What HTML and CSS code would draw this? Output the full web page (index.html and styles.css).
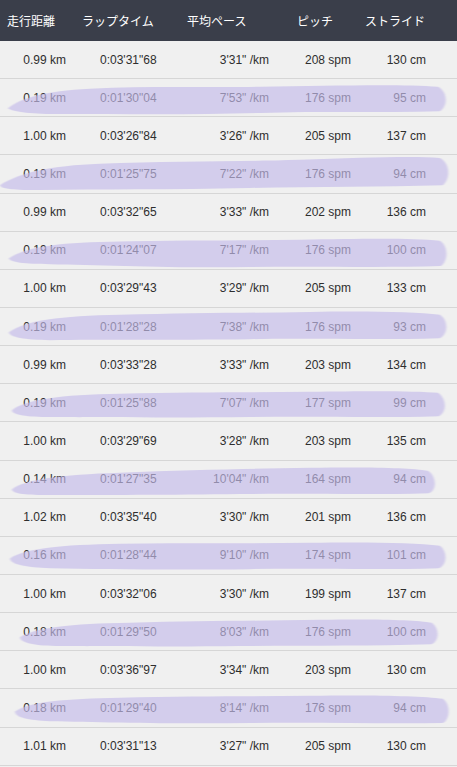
FILE: index.html
```html
<!DOCTYPE html>
<html lang="ja">
<head>
<meta charset="utf-8">
<title>ラップ</title>
<link rel="stylesheet" href="styles.css">
</head>
<body>
<svg class="defs" width="0" height="0" aria-hidden="true"><filter id="soft"><feGaussianBlur stdDeviation="0.8"/></filter></svg>
<div class="table">
  <div class="row head">
    <div class="c1">走行距離</div><div class="c2">ラップタイム</div><div class="c3">平均ペース</div><div class="c4">ピッチ</div><div class="c5">ストライド</div>
  </div>
  <div class="row"><div class="c1">0.99 km</div><div class="c2">0:03'31"68</div><div class="c3">3'31" /km</div><div class="c4">208 spm</div><div class="c5">130 cm</div></div>
  <div class="row rest"><div class="c1">0.19 km</div><div class="c2">0:01'30"04</div><div class="c3">7'53" /km</div><div class="c4">176 spm</div><div class="c5">95 cm</div>
    <svg class="brush" viewBox="0 0 457 38" preserveAspectRatio="none"><path d="M8 30 C20 20 45 12 90 10 C150 7 200 9 260 8 C330 7 400 5 438 8 C448 13 448 28 440 33 C380 35 320 33 260 35 C190 37 120 36 60 36 C35 36 12 34 8 30 Z"/></svg></div>
  <div class="row"><div class="c1">1.00 km</div><div class="c2">0:03'26"84</div><div class="c3">3'26" /km</div><div class="c4">205 spm</div><div class="c5">137 cm</div></div>
  <div class="row rest"><div class="c1">0.19 km</div><div class="c2">0:01'25"75</div><div class="c3">7'22" /km</div><div class="c4">176 spm</div><div class="c5">94 cm</div>
    <svg class="brush" viewBox="0 0 457 38" preserveAspectRatio="none"><path d="M0 31 C20 18 50 11 100 9 C170 6 240 7 300 5 C360 3 410 1 440 3 C451 9 450 25 443 31 C380 33 320 32 250 34 C170 36 100 35 40 36 C15 36 1 35 0 31 Z"/></svg></div>
  <div class="row"><div class="c1">0.99 km</div><div class="c2">0:03'32"65</div><div class="c3">3'33" /km</div><div class="c4">202 spm</div><div class="c5">136 cm</div></div>
  <div class="row rest"><div class="c1">0.19 km</div><div class="c2">0:01'24"07</div><div class="c3">7'17" /km</div><div class="c4">176 spm</div><div class="c5">100 cm</div>
    <svg class="brush" viewBox="0 0 457 38" preserveAspectRatio="none"><path d="M9 27 C25 16 55 11 110 10 C180 8 240 9 300 8 C360 7 410 6 440 9 C449 15 448 30 441 35 C380 37 320 35 250 36 C170 37 100 34 50 33 C25 33 9 31 9 27 Z"/></svg></div>
  <div class="row"><div class="c1">1.00 km</div><div class="c2">0:03'29"43</div><div class="c3">3'29" /km</div><div class="c4">205 spm</div><div class="c5">133 cm</div></div>
  <div class="row rest"><div class="c1">0.19 km</div><div class="c2">0:01'28"28</div><div class="c3">7'38" /km</div><div class="c4">176 spm</div><div class="c5">93 cm</div>
    <svg class="brush" viewBox="0 0 457 38" preserveAspectRatio="none"><path d="M9 25 C25 13 60 8 120 7 C190 5 250 5 310 4 C370 3 415 4 440 7 C449 13 448 27 440 31 C380 33 320 31 250 32 C170 33 100 32 50 33 C25 33 9 30 9 25 Z"/></svg></div>
  <div class="row"><div class="c1">0.99 km</div><div class="c2">0:03'33"28</div><div class="c3">3'33" /km</div><div class="c4">203 spm</div><div class="c5">134 cm</div></div>
  <div class="row rest"><div class="c1">0.19 km</div><div class="c2">0:01'25"88</div><div class="c3">7'07" /km</div><div class="c4">177 spm</div><div class="c5">99 cm</div>
    <svg class="brush" viewBox="0 0 457 38" preserveAspectRatio="none"><path d="M12 27 C25 16 60 11 120 10 C190 8 250 9 310 8 C370 7 415 7 438 9 C447 15 447 29 439 33 C380 35 320 33 250 34 C170 35 100 34 50 34 C28 34 12 32 12 27 Z"/></svg></div>
  <div class="row"><div class="c1">1.00 km</div><div class="c2">0:03'29"69</div><div class="c3">3'28" /km</div><div class="c4">203 spm</div><div class="c5">135 cm</div></div>
  <div class="row rest"><div class="c1">0.14 km</div><div class="c2">0:01'27"35</div><div class="c3">10'04" /km</div><div class="c4">164 spm</div><div class="c5">94 cm</div>
    <svg class="brush" viewBox="0 0 457 38" preserveAspectRatio="none"><path d="M12 29 C25 19 60 14 120 12 C190 9 250 8 310 7 C370 6 410 7 428 10 C437 16 437 30 429 33 C370 35 310 33 240 34 C170 35 100 35 50 35 C28 35 12 34 12 29 Z"/></svg></div>
  <div class="row"><div class="c1">1.02 km</div><div class="c2">0:03'35"40</div><div class="c3">3'30" /km</div><div class="c4">201 spm</div><div class="c5">136 cm</div></div>
  <div class="row rest"><div class="c1">0.16 km</div><div class="c2">0:01'28"44</div><div class="c3">9'10" /km</div><div class="c4">174 spm</div><div class="c5">101 cm</div>
    <svg class="brush" viewBox="0 0 457 38" preserveAspectRatio="none"><path d="M10 22 C25 12 60 8 120 7 C190 6 250 7 310 6 C370 5 415 6 440 9 C448 15 447 29 439 32 C380 34 320 32 250 33 C170 34 100 33 50 32 C26 31 10 28 10 22 Z"/></svg></div>
  <div class="row"><div class="c1">1.00 km</div><div class="c2">0:03'32"06</div><div class="c3">3'30" /km</div><div class="c4">199 spm</div><div class="c5">137 cm</div></div>
  <div class="row rest"><div class="c1">0.18 km</div><div class="c2">0:01'29"50</div><div class="c3">8'03" /km</div><div class="c4">176 spm</div><div class="c5">100 cm</div>
    <svg class="brush" viewBox="0 0 457 38" preserveAspectRatio="none"><path d="M20 25 C35 15 70 11 130 10 C200 8 260 8 320 7 C375 6 415 7 432 10 C440 16 439 29 432 32 C370 34 310 33 240 34 C170 35 110 34 60 34 C36 34 20 31 20 25 Z"/></svg></div>
  <div class="row"><div class="c1">1.00 km</div><div class="c2">0:03'36"97</div><div class="c3">3'34" /km</div><div class="c4">203 spm</div><div class="c5">130 cm</div></div>
  <div class="row rest"><div class="c1">0.18 km</div><div class="c2">0:01'29"40</div><div class="c3">8'14" /km</div><div class="c4">176 spm</div><div class="c5">94 cm</div>
    <svg class="brush" viewBox="0 0 457 38" preserveAspectRatio="none"><path d="M15 23 C30 13 65 10 120 9 C190 7 250 8 310 7 C370 6 420 7 443 10 C451 16 450 31 443 35 C380 36 320 34 250 35 C170 36 100 34 50 33 C28 32 15 29 15 23 Z"/></svg></div>
  <div class="row"><div class="c1">1.01 km</div><div class="c2">0:03'31"13</div><div class="c3">3'27" /km</div><div class="c4">205 spm</div><div class="c5">130 cm</div></div>
</div>
</body>
</html>
```

FILE: styles.css
```css
html, body {
  margin: 0;
  padding: 0;
  background: #f0f0f0;
}
.defs {
  position: absolute;
  width: 0;
  height: 0;
}
.table {
  width: 457px;
  font-family: "Liberation Sans", Arial, sans-serif;
  font-size: 12px;
  color: #2e2e2e;
}
.row {
  position: relative;
  display: grid;
  grid-template-columns: 70px 110px 93px 82px 75px;
  align-items: center;
  height: 37.15px;
  border-bottom: 1px solid #d6d6d6;
  white-space: nowrap;
}
.row .c1 { text-align: right; padding-right: 4px; }
.row .c2 { text-align: left; padding-left: 30px; }
.row .c3 { text-align: right; padding-right: 4px; }
.row .c4 { text-align: right; padding-right: 4px; }
.row .c5 { text-align: right; padding-right: 4px; }

.head {
  height: 41px;
  border-bottom: none;
  background: #3a3e4a;
  color: #fff;
  font-family: "Noto Sans CJK JP", "Liberation Sans", sans-serif;
  font-size: 12px;
}
.head .c1 { text-align: left; padding: 0 0 0 7px; }
.head .c2 { text-align: left; padding: 0 0 0 12px; }
.head .c3 { text-align: left; padding: 0 0 0 7px; }
.head .c4 { text-align: left; padding: 0 0 0 24px; }
.head .c5 { text-align: left; padding: 0 0 0 10px; }

.brush {
  position: absolute;
  left: 0;
  top: 0;
  width: 457px;
  height: 37px;
  pointer-events: none;
}
.brush path {
  fill: rgba(196, 186, 234, 0.66);
  filter: url(#soft);
}
```
